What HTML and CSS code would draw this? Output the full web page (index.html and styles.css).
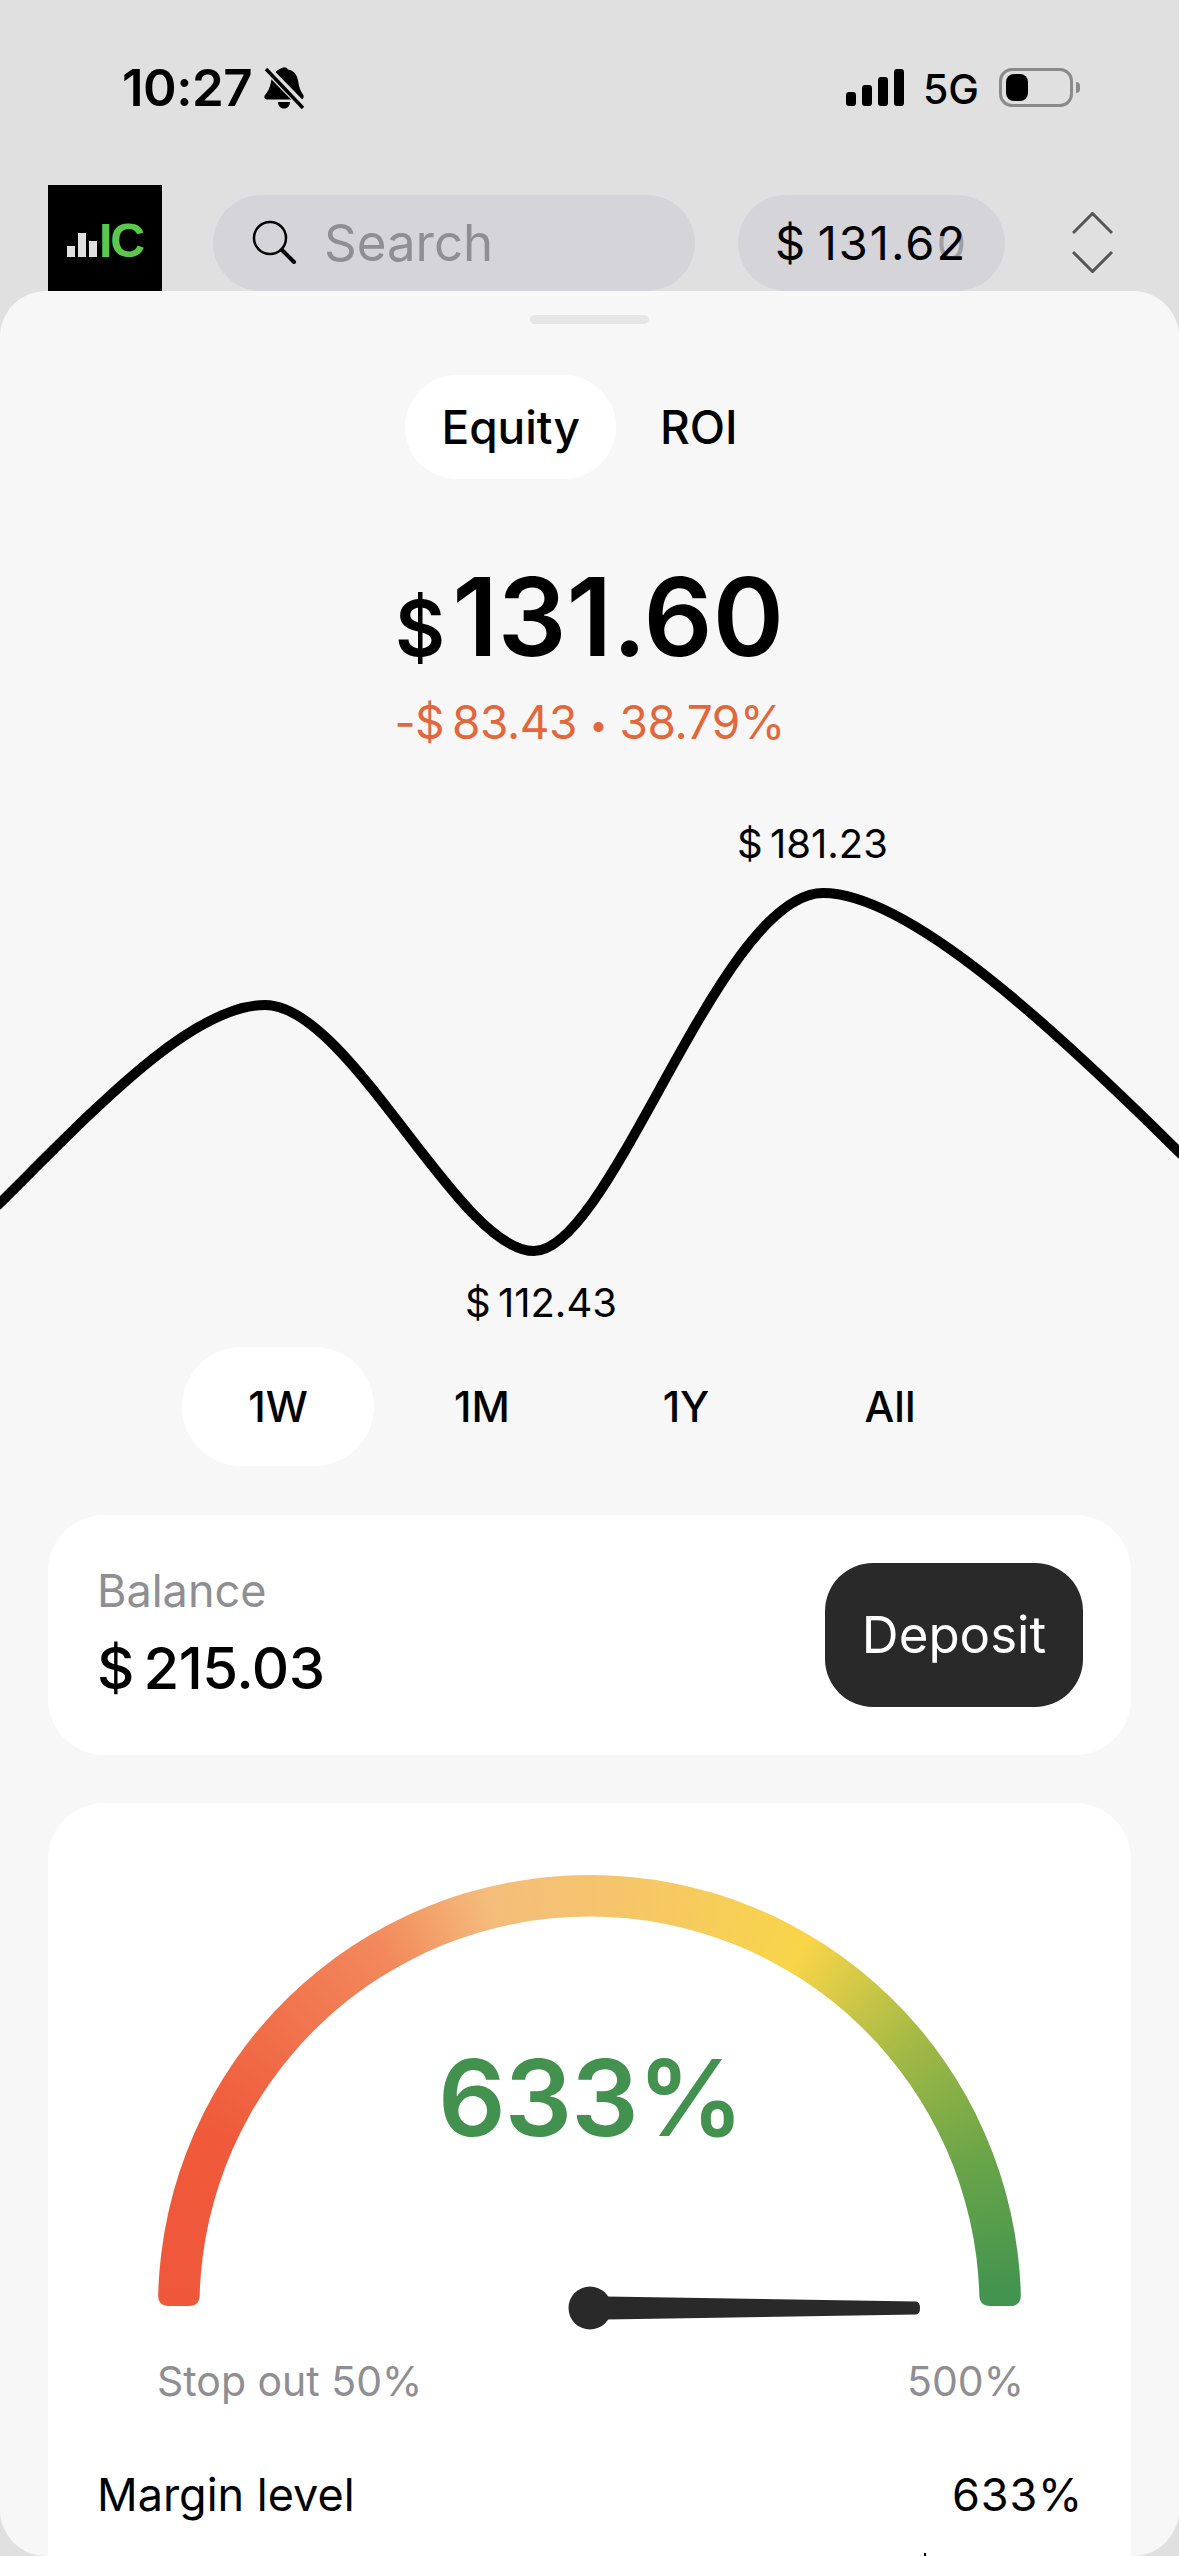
FILE: index.html
```html
<!DOCTYPE html>
<html lang="en">
<head>
<meta charset="utf-8">
<title>Equity</title>
<link rel="stylesheet" href="styles.css">
</head>
<body>
<div class="screen">
  <div class="status">
    <div class="status-left">
      <span class="time">10:27</span>
      <svg class="bell" viewBox="0 0 40 42" width="40" height="42">
        <path d="M18 1c2-1.500 4.500-.5 6 1.500 6 1 9 5.500 10 11 1 6 2 10 5 14 1.500 2 .5 5-2 5H3c-2.500 0-3.500-2.500-2-4.500 3-3.500 5-7.500 6-13C8 8 12 3 18 1z" fill="#000"/>
        <path d="M14 35h12c0 4-2.500 6.500-6 6.500s-6-2.500-6-6.500z" fill="#000"/>
        <path d="M2 1l38 39" stroke="#e0e0e0" stroke-width="8"/>
        <path d="M2 2l37 39" stroke="#000" stroke-width="3.500"/>
      </svg>
    </div>
    <div class="status-right">
      <div class="signal"><i class="b1"></i><i class="b2"></i><i class="b3"></i><i class="b4"></i></div>
      <span class="net">5G</span>
      <div class="battery"><div class="battery-fill"></div><div class="battery-tip"></div></div>
    </div>
  </div>

  <div class="header">
    <div class="logo">
      <div class="logo-bars"><i class="l1"></i><i class="l2"></i><i class="l3"></i></div>
      <span class="logo-text">IC</span>
    </div>
    <div class="search">
      <svg class="search-icon" viewBox="0 0 46 46" width="46" height="46">
        <circle cx="19" cy="19" r="16" fill="none" stroke="#000" stroke-width="2.500"/>
        <path d="M31 31l12 12" stroke="#000" stroke-width="4" stroke-linecap="round"/>
      </svg>
      <span class="search-text">Search</span>
    </div>
    <div class="acct"><span class="acct-val">$&#8201;131.6<span class="last">2<span class="ghost">0</span></span></span></div>
    <svg class="updown" viewBox="0 0 41 61" width="41" height="61">
      <path d="M1 21L20.500 1.500 40 21M1 40L20.500 59.500 40 40" fill="none" stroke="#555" stroke-width="3"/>
    </svg>
  </div>

  <div class="sheet">
    <div class="handle"></div>
    <div class="seg">
      <div class="seg-item active">Equity</div>
      <div class="seg-item">ROI</div>
    </div>
    <div class="amount"><span class="cur">$</span>131.60</div>
    <div class="delta">-$&#8201;83.43 <span class="dot">&#8226;</span> 38.79%</div>

    <div class="chart">
      <svg class="chart-line" viewBox="0 0 1179 440" width="1179" height="440">
        <path d="M-3 357C90 265 190 156 265 156C350 156 458 402 534 402C612 402 720 44 823 44C910 44 1060 185 1182 306" fill="none" stroke="#000" stroke-width="10"/>
      </svg>
      <span class="chart-label hi">$&#8201;181.23</span>
      <span class="chart-label lo">$&#8201;112.43</span>
    </div>

    <div class="ranges">
      <div class="range active">1W</div>
      <div class="range">1M</div>
      <div class="range">1Y</div>
      <div class="range">All</div>
    </div>

    <div class="card balance">
      <div class="bal-info">
        <div class="bal-label">Balance</div>
        <div class="bal-value">$&#8201;215.03</div>
      </div>
      <div class="deposit">Deposit</div>
    </div>

    <div class="card gauge-card">
      <div class="gauge">
        <div class="arc"></div>
        <div class="gauge-value">633%</div>
        <svg class="needle" viewBox="0 0 356 44" width="356" height="44">
          <circle cx="22" cy="22" r="21.500" fill="#292929"/>
          <path d="M38 10.500L348 15.500Q352 16 352 22Q352 28 348 28.500L38 33.500z" fill="#292929"/>
        </svg>
      </div>
      <div class="scale"><span>Stop out 50%</span><span>500%</span></div>
      <div class="row"><span>Margin level</span><span class="row-value">633%</span></div>
      <div class="next-row-tip"></div>
    </div>
  </div>
</div>
</body>
</html>
```
FILE: styles.css
```css
* { box-sizing: border-box; }
html, body { margin: 0; padding: 0; }
body { font-family: Inter, "Liberation Sans", sans-serif; color: #000; background: #e0e0e0; }
.screen { width: 1179px; height: 2556px; overflow: hidden; background: #e0e0e0; display: flex; flex-direction: column; }

.status { height: 185px; flex: none; display: flex; justify-content: space-between; padding: 67px 106px 0 122px; }
.status-left { display: flex; align-items: flex-start; gap: 12px; height: 42px; }
.time { font-size: 51px; font-weight: 600; line-height: 42px; letter-spacing: -.5px; }
.status-right { display: flex; align-items: flex-start; height: 42px; }
.signal { display: flex; align-items: flex-end; gap: 6px; width: 58px; height: 37px; margin-top: 2px; }
.signal i { display: block; width: 10px; background: #000; border-radius: 3px; }
.signal .b1 { height: 14px; }
.signal .b2 { height: 21px; }
.signal .b3 { height: 29px; }
.signal .b4 { height: 37px; }
.net { font-size: 41px; font-weight: 500; line-height: 30px; margin: 7px 20px 0 19px; }
.battery { position: relative; width: 74px; height: 39px; margin-top: 1px; border: 3px solid #8a8a8a; border-radius: 13px; padding: 3px 4px; }
.battery-fill { width: 22px; height: 27px; background: #000; border-radius: 8px; }
.battery-tip { position: absolute; left: 74px; top: 11px; width: 4px; height: 11px; background: #8a8a8a; border-radius: 0 6px 6px 0; }

.header { height: 106px; flex: none; display: flex; align-items: flex-start; padding-left: 48px; }
.logo { flex: none; width: 114px; height: 116px; background: #000; display: flex; align-items: flex-start; padding: 38px 0 0 19px; }
.logo-bars { display: flex; align-items: flex-end; gap: 3px; height: 35px; padding-bottom: 1px; }
.logo-bars i { display: block; width: 8px; background: #e0e0e0; }
.logo-bars .l1 { height: 11px; }
.logo-bars .l2 { height: 24px; }
.logo-bars .l3 { height: 16px; }
.logo-text { font-family: "Liberation Sans", sans-serif; font-weight: 700; font-size: 48px; line-height: 35px; color: #5cc84b; margin-left: 2px; letter-spacing: -2px; }
.search { flex: none; width: 482px; height: 96px; margin: 10px 0 0 51px; background: #d4d4d9; border-radius: 48px; display: flex; align-items: center; padding-left: 38px; }
.search-icon { flex: none; margin-top: -2px; }
.search-text { font-size: 51px; color: #8e8e93; margin-left: 27px; line-height: 96px; }
.acct { flex: none; width: 267px; height: 96px; margin: 10px 0 0 43px; background: #d4d4d9; border-radius: 48px; display: flex; align-items: center; padding-left: 37px; }
.acct-val { font-size: 47px; line-height: 96px; white-space: nowrap; letter-spacing: 2px; }
.last { position: relative; display: inline-block; }
.ghost { position: absolute; left: 0; top: 0; color: rgba(0,0,0,.25); }
.updown { flex: none; margin: 27px 0 0 67px; }

.sheet { position: relative; flex: none; height: 2265px; background: #f7f7f7; border-radius: 46px; overflow: hidden; display: flex; flex-direction: column; }
.handle { flex: none; width: 119px; height: 9px; margin: 24px auto 0; background: #e6e6e6; border-radius: 5px; }
.seg { flex: none; display: flex; justify-content: center; gap: 8px; margin-top: 51px; }
.seg-item { height: 104px; padding: 0 36px; border-radius: 52px; font-size: 46px; font-weight: 450; line-height: 104px; }
.seg-item.active { background: #fff; }
.amount { flex: none; height: 130px; margin-top: 73px; text-align: center; font-size: 108px; font-weight: 600; line-height: 130px; }
.cur { font-size: 77px; font-weight: 600; margin-right: 7px; }
.delta { flex: none; height: 56px; margin-top: 12px; text-align: center; font-size: 46px; line-height: 56px; color: #e4673c; letter-spacing: -.45px; }
.dot { font-size: 32px; vertical-align: 3px; }

.chart { position: relative; flex: none; height: 440px; margin-top: 99px; }
.chart-line { position: absolute; left: 0; top: 0; }
.chart-label { position: absolute; font-size: 40px; line-height: 48px; white-space: nowrap; }
.chart-label.hi { left: 737px; top: -29px; }
.chart-label.lo { left: 465px; top: 430px; }

.ranges { flex: none; display: flex; justify-content: center; gap: 12px; padding-right: 11px; margin-top: 58px; }
.range { width: 192px; height: 119px; border-radius: 60px; text-align: center; font-size: 42px; font-weight: 450; line-height: 119px; }
.range.active { background: #fff; }

.card { flex: none; width: 1083px; margin-left: 48px; background: #fff; border-radius: 56px; }
.balance { height: 240px; margin-top: 49px; display: flex; justify-content: space-between; align-items: flex-start; padding: 48px 48px 0 49px; }
.bal-label { font-size: 45px; line-height: 54px; margin-top: 1px; color: #8e8e93; }
.bal-value { font-size: 58px; font-weight: 500; line-height: 70px; margin-top: 15px; letter-spacing: -.5px; }
.deposit { width: 258px; height: 144px; background: #292929; border-radius: 48px; color: #fff; font-size: 51px; line-height: 144px; text-align: center; }

.gauge-card { position: relative; height: 900px; margin-top: 48px; padding-top: 72px; }
.gauge { position: relative; width: 863px; height: 431px; margin: 0 auto; }
.arc { width: 863px; height: 431px; background: conic-gradient(from 270deg at 50% 100%, #ef573a 0deg, #ef5a3b 25deg, #f2895c 60deg, #f4bd7c 76deg, #f5c46c 92deg, #f8d548 121deg, #a2b945 141deg, #6aa548 159deg, #43944f 178deg, #43944f 360deg); clip-path: path("M0.15 420A431.500 431.500 0 0 1 862.850 420Q863 431 852 431L832 431Q821.500 431 821.330 420A390 390 0 0 0 41.670 420Q41.500 431 31 431L11 431Q0 431 0.150 420Z"); }
.gauge-value { position: absolute; left: 2px; right: 0; top: 158px; text-align: center; font-size: 106px; font-weight: 560; line-height: 130px; color: #43914f; letter-spacing: -1px; }
.needle { position: absolute; left: 410px; top: 411px; }
.scale { display: flex; justify-content: space-between; padding: 0 107px 0 109px; margin-top: 50px; font-size: 41px; line-height: 50px; color: #8e8e93; }
.row { display: flex; justify-content: space-between; padding: 0 48px 0 49px; margin-top: 62px; font-size: 45px; line-height: 54px; }
.row-value { letter-spacing: .8px; }
.next-row-tip { position: absolute; left: 876px; top: 750px; width: 2px; height: 4px; background: #000; }
```
